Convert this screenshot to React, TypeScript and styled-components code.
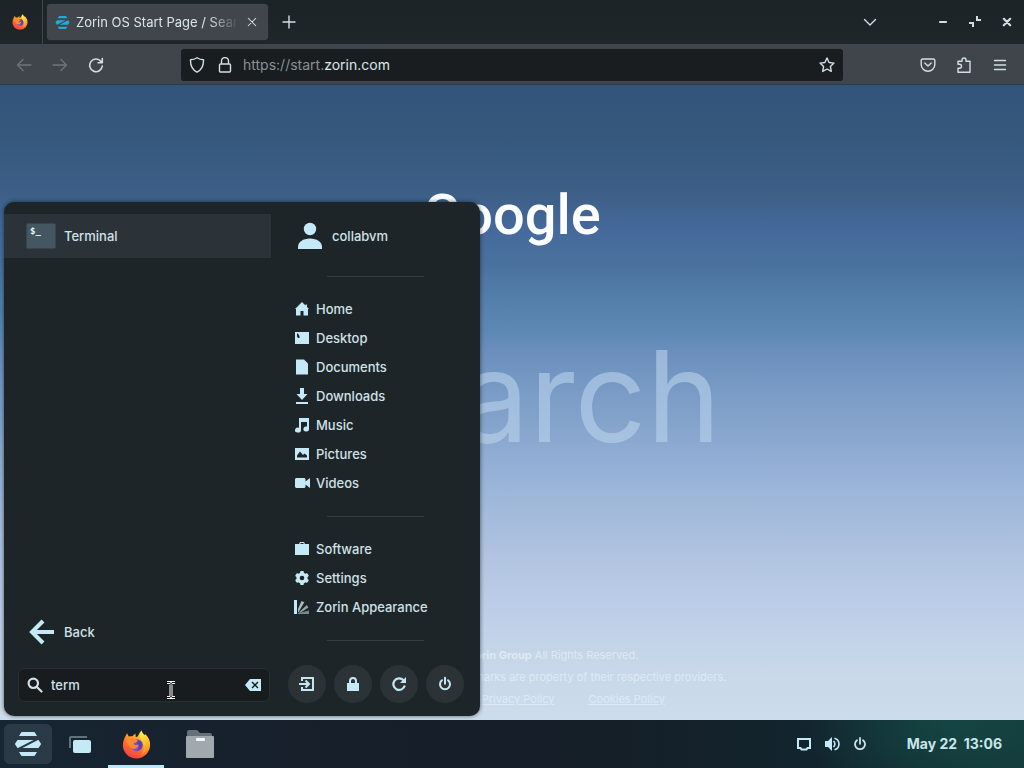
import React from 'react';
import styled, { createGlobalStyle } from 'styled-components';

const Global = createGlobalStyle`
  * { box-sizing: border-box; }
  body { margin: 0; font-family: Inter, "Liberation Sans", sans-serif; color: #d3e2e8; }
  button { font: inherit; color: inherit; background: none; border: 0; padding: 0; margin: 0; }
  input { font: inherit; color: inherit; }
  svg { display: block; flex: none; }
  h1 { margin: 0; }
`;

const Desktop = styled.div`
  position: relative;
  display: flex;
  flex-direction: column;
  min-height: 100vh;
  overflow: hidden;
`;

const Browser = styled.section`
  flex: 1;
  display: flex;
  flex-direction: column;
`;

const TabBar = styled.header`
  display: flex;
  align-items: center;
  height: 44px;
  background: linear-gradient(#1b2427, #1f262a);
`;

const PinnedTab = styled.button`
  display: flex;
  align-items: center;
  justify-content: center;
  width: 43px;
  height: 44px;
  padding-right: 3px;
  border-right: 1px solid #3f474d;
`;

const Tab = styled.div`
  display: flex;
  align-items: center;
  gap: 6px;
  width: 221px;
  height: 36px;
  margin-left: 4px;
  padding: 0 8px;
  border-radius: 4px;
  background: #40464b;
  box-shadow: 0 0 1px #50575c;
`;

const TabTitle = styled.span`
  flex: 1;
  overflow: hidden;
  white-space: nowrap;
  font-size: 13px;
  line-height: 20px;
  color: #d9e5ea;
  mask-image: linear-gradient(to right, #000 82%, transparent);
`;

const IconButton = styled.button<{ $size?: number; $dim?: boolean }>`
  display: flex;
  align-items: center;
  justify-content: center;
  width: ${(p) => p.$size ?? 36}px;
  height: ${(p) => p.$size ?? 36}px;
  color: ${(p) => (p.$dim ? '#6d7478' : '#cfe0e6')};
`;

const WindowControls = styled.div`
  display: flex;
  margin-left: auto;
`;

const TitleButtons = styled.div`
  display: flex;
  margin-left: 39px;
  margin-right: 1px;
`;

const Toolbar = styled.nav`
  display: flex;
  align-items: center;
  height: 41px;
  padding: 1px 6px 0;
  background: #40454b;
  border-bottom: 1px solid #2b3b4c;
`;

const AddressBar = styled.label`
  display: flex;
  align-items: center;
  flex: 1;
  height: 32px;
  max-width: 662px;
  margin: 0 auto 0 67px;
  padding: 0 8px;
  gap: 12px;
  border-radius: 3px;
  background: #191d20;
  color: #cfe0e6;
`;

const Address = styled.span`
  flex: 1;
  display: flex;
  margin-left: -2px;
  font-size: 14px;
  line-height: 20px;
  color: #899196;
  b { font-weight: 400; color: #dce8ec; }
`;

const StartPage = styled.main`
  flex: 1;
  display: flex;
  flex-direction: column;
  align-items: center;
  background: linear-gradient(
    #33547b 0%, #35587c 8%, #3e6089 18%, #44689a 22%, #4a719e 28%, #527da9 33%,
    #5e89b4 39%, #6c8ebc 42%, #7699c4 47%, #84a3cb 53%, #94afd6 60%, #a0b9da 66%,
    #b0c3e0 74%, #bdcfe8 83%, #c7d7e9 91%, #cddcec 100%);
`;

const Logo = styled.h1`
  margin-top: 96px;
  font: 500 56px/68px Roboto, sans-serif;
  color: #fbfdff;
`;

const SearchWord = styled.div`
  margin-top: 69px;
  font-size: 126px;
  line-height: 156px;
  color: rgba(187, 211, 237, 0.6);
`;

const Footer = styled.footer`
  margin-top: auto;
  padding-bottom: 10px;
  font-size: 11px;
  line-height: 22px;
  text-align: center;
  color: #dfe9f4;
  p { margin: 0; }
  a { color: inherit; margin: 0 17px; }
`;

const Menu = styled.aside`
  position: absolute;
  left: 4px;
  bottom: 52px;
  display: grid;
  grid-template-columns: 267px 1fr;
  width: 476px;
  height: 514px;
  border-radius: 10px;
  background: #1e2528;
  box-shadow: 0 0 4px rgba(10, 20, 30, 0.65);
  font-size: 13px;
  font-weight: 500;
  line-height: 20px;
  color: #d0e1e8;
`;

const Results = styled.div`
  display: flex;
  flex-direction: column;
  padding: 12px 0 14px;
`;

const ResultRow = styled.button<{ $active?: boolean }>`
  display: flex;
  align-items: center;
  gap: 8px;
  height: 44px;
  padding: 0 0 1px 22px;
  text-align: left;
  background: ${(p) => (p.$active ? '#2b3338' : 'none')};
`;

const TerminalIcon = styled.span`
  width: 30px;
  height: 26px;
  padding: 2px 3px;
  border: 1px solid #35464f;
  border-radius: 2px;
  background: #435661;
  font: 700 9px/11px "DejaVu Sans Mono", monospace;
  color: #e8f6fb;
`;

const SearchField = styled.label`
  display: flex;
  align-items: center;
  gap: 8px;
  height: 34px;
  margin: 14px 1px 0 14px;
  padding: 0 8px;
  border: 1px solid #293034;
  border-radius: 6px;
  background: #191c1f;
`;

const SearchInput = styled.input`
  flex: 1;
  min-width: 0;
  padding: 0;
  border: 0;
  outline: 0;
  background: none;
`;

const Spacer = styled.div`
  flex: 1;
`;

const Places = styled.div`
  display: flex;
  flex-direction: column;
  padding: 12px 13px 13px 17px;
`;

const User = styled.button`
  display: flex;
  align-items: center;
  gap: 8px;
  height: 44px;
  padding-left: 8px;
`;

const Divider = styled.hr`
  width: 97px;
  height: 1px;
  margin: 18px 0 18px 39px;
  border: 0;
  background: #353d41;
`;

const PlaceLink = styled.button`
  display: flex;
  align-items: center;
  gap: 6px;
  height: 29px;
  padding: 0 0 2px 6px;
  white-space: nowrap;
`;

const SessionRow = styled.div`
  display: flex;
  gap: 8px;
  margin-top: auto;
`;

const RoundButton = styled.button`
  display: flex;
  align-items: center;
  justify-content: center;
  width: 38px;
  height: 38px;
  border-radius: 50%;
  background: #2b3337;
  color: #c6e5f2;
`;

const Taskbar = styled.footer`
  display: flex;
  align-items: center;
  height: 48px;
  padding: 0 22px 0 4px;
  background:
    radial-gradient(ellipse 150px 80px at 93% 10%, rgba(22, 78, 74, 0.7), transparent),
    linear-gradient(to right, #162633, #171f2a 32%, #151f28 60%, #12252e 80%, #133838);
`;

const TaskButton = styled.button<{ $width: number; $selected?: boolean; $running?: boolean }>`
  display: flex;
  align-items: center;
  justify-content: center;
  width: ${(p) => p.$width}px;
  height: ${(p) => (p.$selected ? 40 : 48)}px;
  border-radius: ${(p) => (p.$selected ? 6 : 0)}px;
  background: ${(p) => (p.$selected ? '#2a3a47' : 'none')};
  box-shadow: ${(p) => (p.$running ? 'inset 0 -3px #bde6fb' : 'none')};
`;

const Tray = styled.div`
  display: flex;
  align-items: center;
  margin-left: auto;
  margin-right: 33px;
`;

const Clock = styled.time`
  font-size: 14px;
  font-weight: 700;
  line-height: 20px;
  white-space: pre;
  color: #c9e5ea;
`;

const Pointer = styled.svg`
  position: absolute;
  left: 166px;
  bottom: 68px;
`;

const ICE = '#c6e9f8';

type LineProps = { d: string; size?: number; width?: number };
const Line = ({ d, size = 16, width = 1.4 }: LineProps) => (
  <svg width={size} height={size} viewBox="0 0 16 16" fill="none" stroke="currentColor"
    strokeWidth={width} strokeLinecap="round" strokeLinejoin="round"><path d={d} /></svg>
);

const Solid = ({ d, size = 16 }: { d: string; size?: number }) => (
  <svg width={size} height={size} viewBox="0 0 16 16" fill={ICE} fillRule="evenodd"><path d={d} /></svg>
);

const Firefox = ({ size }: { size: number }) => (
  <svg width={size} height={size} viewBox="0 0 32 32">
    <defs>
      <linearGradient id="ffBody" x1="0.8" y1="0" x2="0.25" y2="1">
        <stop offset="0" stopColor="#fff34a" />
        <stop offset="0.35" stopColor="#ffa52b" />
        <stop offset="0.65" stopColor="#ff6b2c" />
        <stop offset="1" stopColor="#f0384e" />
      </linearGradient>
      <linearGradient id="ffTail" x1="0.4" y1="0" x2="0.7" y2="1">
        <stop offset="0" stopColor="#fff14d" />
        <stop offset="0.5" stopColor="#ffc42b" />
        <stop offset="1" stopColor="#ff8a24" />
      </linearGradient>
    </defs>
    <path fill="url(#ffBody)" d="M3.500 7.500 5.600 3.500 7.400 7.200c1.400-.5 2.800-.5 4-.2L14.800 3.800l.4 4.200C18.500 7.500 18 4 21.500.5c.8 3 2 3.500 3.200 5.200l.8-1.200C29.500 8 31.500 12.500 31 17.500 30.300 25.500 24 31.500 16 31.500S1 25 1 17c0-3.600 1-6.500 2.500-9.500z" />
    <circle cx="16" cy="16.800" r="6.600" fill="#8a50c8" />
    <path fill="#5b3fb4" d="M15 11.500c5-1.500 8.500 2 7.500 6.500-.8 3.500-4 5.500-7 5 3-1.500 4-4.500 2-6.500z" />
    <path fill="#ff8b2b" d="M4.500 12.500c2.500-4 7.500-4.500 10.500-1.800 1.400.3 2.500.8 2.500 1.600-1.500 1.200-4.500 1-4.700 3.400 1.800 1.800 4 1 5.700.3-1 5-8 6.500-10.500 2.200-1.500-1.700-2.500-3.700-3.500-5.700z" />
    <path fill="url(#ffTail)" d="M21.500.5c.8 3 2 3.500 3.200 5.200C29 10 30 16 27.500 21c-1.200 2.800-3.500 5-6 6.200 3-5 3.400-9.500 1.400-13.200C21.300 10.600 17.500 7.500 21.500.5z" />
  </svg>
);

const Zorin = ({ size, color }: { size: number; color: string }) => (
  <svg width={size} height={size} viewBox="0 0 28 28" fill={color}>
    <path d="M7.500 2h13l2.500 4H5zM7.500 26h13l2.500-4H5z" />
    <path d="M3.500 10h16L4 18h-.5L.8 14zM24.500 18h-16L24 10h.5l2.700 4z" />
  </svg>
);

const Gear = () => (
  <svg width={16} height={16} viewBox="0 0 16 16">
    <g fill={ICE}>
      <circle cx="8" cy="8" r="5.600" />
      {[0, 60, 120].map((a) => (
        <rect key={a} x="6.200" y="1" width="3.600" height="14" rx="0.800" transform={`rotate(${a} 8 8)`} />
      ))}
    </g>
    <circle cx="8" cy="8" r="2.300" fill="#1e2528" />
  </svg>
);

const Swatches = () => (
  <svg width={16} height={16} viewBox="0 0 16 16">
    <path fill={ICE} d="M0 1h3v14H0z" />
    <path fill="#a9bcc5" d="M4 10 7.500 2l2.800 1.300L4 14z" />
    <path fill="#93a5ae" d="M5 13.300 12.800 6l1.600 2.400L6 14z" />
    <path fill="#77888f" d="M4 15v-.8l11-2.700V15z" />
  </svg>
);

const PLACES = [
  { name: 'Home', d: 'M8 1 1 8h1v6.500h4.500V10h3v4.500H14V8h1l-2-2V3.500h-1.500v1z' },
  { name: 'Desktop', d: 'M1 2h14v12H1zM3 3.500v3l1 1.500h1.500V6L4 3.500z' },
  { name: 'Documents', d: 'M2 .5h8L14 4.500v11H2z' },
  { name: 'Downloads', d: 'M6 0h4v6h3.500L8 12 2.500 6H6zM2 14h12v2H2z' },
  { name: 'Music', d: 'M5 1h10v11a2.800 2.500 0 1 1-2-2.400V5H7v8a3 2.500 0 1 1-2-2.300z' },
  { name: 'Pictures', d: 'M1 2h14v12H1zM3 11.500h10V9.500l-2.500-2-1.500 1.500-3-3.500L3 9.500z' },
  { name: 'Videos', d: 'M2 3h8.500l1 1v2.500L16 3v10l-4.500-3.500V12l-1 1H2l-1-1V4z' },
];

const POWER = 'M5 4.200a5 5 0 1 0 6 0M8 1.800v6';

export default function App() {
  return (
    <>
      <Global />
      <Desktop>
        <Browser>
          <TabBar>
            <PinnedTab aria-label="Firefox View"><Firefox size={16} /></PinnedTab>
            <Tab>
              <Zorin size={15} color="#22a9dc" />
              <TabTitle>Zorin OS Start Page / Search</TabTitle>
              <IconButton $size={16} aria-label="Close tab"><Line size={12} d="M3 3l10 10M13 3L3 13" /></IconButton>
            </Tab>
            <IconButton $size={42} aria-label="New tab"><Line d="M8 2v12M2 8h12" /></IconButton>
            <WindowControls>
              <IconButton aria-label="List all tabs"><Line d="M2.500 5.500 8 11l5.500-5.500" /></IconButton>
            </WindowControls>
            <TitleButtons>
              <IconButton $size={32} aria-label="Minimize"><Line width={2.200} d="M5 8h6" /></IconButton>
              <IconButton $size={32} aria-label="Restore">
                <svg width={16} height={16} viewBox="0 0 16 16" fill="none" stroke="currentColor" strokeWidth={2}>
                  <path d="M10 2v4h4M2 9h4v4" />
                </svg>
              </IconButton>
              <IconButton $size={32} aria-label="Close"><Line width={2.200} d="M4.800 4.800l6.400 6.400M11.200 4.800l-6.400 6.400" /></IconButton>
            </TitleButtons>
          </TabBar>
          <Toolbar>
            <IconButton $dim aria-label="Back"><Line d="M15 8H1.500M7 2.500 1.500 8 7 13.500" /></IconButton>
            <IconButton $dim aria-label="Forward"><Line d="M1 8h13.500M9 2.500 14.500 8 9 13.500" /></IconButton>
            <IconButton aria-label="Reload"><Line width={1.600} d="M13 4.500A6.300 6.300 0 1 0 14.300 9M14.300 1.500v4.200h-4.200" /></IconButton>
            <AddressBar>
              <Line d="M8 .8c2 1.400 4.200 2 6.500 2C14.700 9 12.500 13 8 15.200 3.500 13 1.300 9 1.500 2.800c2.300 0 4.500-.6 6.500-2z" />
              <Line d="M3.500 7h9a1 1 0 0 1 1 1v6a1 1 0 0 1-1 1h-9a1 1 0 0 1-1-1V8a1 1 0 0 1 1-1zM4.500 7V4a3.500 3.500 0 0 1 7 0v3" />
              <Address>https://start.<b>zorin.com</b></Address>
              <Line d="M8 1l2.100 4.500 4.900.6-3.600 3.400.9 4.900L8 12l-4.300 2.400.9-4.900L1 6.100l4.900-.6z" />
            </AddressBar>
            <IconButton aria-label="Save to Pocket"><Line d="M2.500 2h11a1.300 1.300 0 0 1 1.300 1.300V7.500a6.800 6.800 0 0 1-13.600 0V3.300A1.300 1.300 0 0 1 2.500 2zM4.800 6 8 9l3.200-3" /></IconButton>
            <IconButton aria-label="Extensions"><Line d="M2 5.500V4.300h4V3a2 2 0 0 1 4 0v1.300h4v11H2v-4h1.500a2 2 0 0 0 0-4H2z" /></IconButton>
            <IconButton aria-label="Application menu"><Line d="M2.500 3.500h11M2.500 8h11M2.500 12.500h11" /></IconButton>
          </Toolbar>
          <StartPage>
            <Logo>Google</Logo>
            <SearchWord>Search</SearchWord>
            <Footer>
              <p>© 2008 - 2023 <b>Zorin Group</b> All Rights Reserved.</p>
              <p>All logos, service marks and trademarks are property of their respective providers.</p>
              <p><a href="#terms">Terms of Service</a><a href="#privacy">Privacy Policy</a><a href="#cookies">Cookies Policy</a></p>
            </Footer>
          </StartPage>
        </Browser>

        <Menu>
          <Results>
            <ResultRow $active><TerminalIcon>$_</TerminalIcon>Terminal</ResultRow>
            <Spacer />
            <ResultRow>
              <svg width={30} height={30} viewBox="0 0 30 30" fill="none" stroke={ICE} strokeWidth={4}>
                <path d="M28 15H6M17 4 6 15l11 11" />
              </svg>
              Back
            </ResultRow>
            <SearchField>
              <Line width={2.200} d="M10.200 10.200 14.500 14.500M11 6.300a4.700 4.700 0 1 1-9.400 0a4.700 4.700 0 0 1 9.400 0z" />
              <SearchInput defaultValue="term" aria-label="Search" />
              <Solid d="M5 2h11v12H5L0 8zM7.500 4.500 6.500 5.500 9 8l-2.500 2.500 1 1L10 9l2.500 2.500 1-1L11 8l2.500-2.500-1-1L10 7z" />
            </SearchField>
          </Results>
          <Places>
            <User>
              <svg width={28} height={28} viewBox="0 0 28 28" fill={ICE}>
                <circle cx="14" cy="7" r="6.200" /><path d="M2 27v-2c0-5 5-8.500 12-8.500S26 20 26 25v2z" />
              </svg>
              collabvm
            </User>
            <Divider />
            {PLACES.map((p) => <PlaceLink key={p.name}><Solid d={p.d} />{p.name}</PlaceLink>)}
            <Divider />
            <PlaceLink><Solid d="M1 3h4l1-2h4l1 2h4v11H1zM6.200 3h3.600L9.300 2H6.700z" />Software</PlaceLink>
            <PlaceLink><Gear />Settings</PlaceLink>
            <PlaceLink><Swatches />Zorin Appearance</PlaceLink>
            <Divider />
            <SessionRow>
              <RoundButton aria-label="Log out">
                <svg width={16} height={16} viewBox="0 0 16 16" fill="none" stroke="currentColor" strokeWidth={2}>
                  <path d="M3 5V2h11v12H3v-3M0 8h9M6.500 4.500 10 8l-3.500 3.500" />
                </svg>
              </RoundButton>
              <RoundButton aria-label="Lock"><Solid d="M2 7h2V5a4 4 0 0 1 8 0v2h2v8H2zM6 7h4V5a2 2 0 0 0-4 0z" /></RoundButton>
              <RoundButton aria-label="Restart">
                <svg width={16} height={16} viewBox="0 0 16 16">
                  <path d="M12.500 4.300A5.800 5.800 0 1 0 13.800 9.500" fill="none" stroke="currentColor" strokeWidth={2.200} />
                  <path d="M15 1v6H9z" fill="currentColor" />
                </svg>
              </RoundButton>
              <RoundButton aria-label="Power off"><Line width={2} d={POWER} /></RoundButton>
            </SessionRow>
          </Places>
        </Menu>

        <Pointer width={10} height={20} viewBox="0 0 10 20" fill="none">
          <path d="M1 2.500h3l1 1 1-1h3M1 17.500h3l1-1 1 1h3M5 3v14" stroke="#fff" strokeWidth={3} />
          <path d="M1 2.500h3l1 1 1-1h3M1 17.500h3l1-1 1 1h3M5 3v14" stroke="#111" strokeWidth={1} />
        </Pointer>

        <Taskbar>
          <TaskButton $width={48} $selected aria-label="Zorin menu"><Zorin size={28} color={ICE} /></TaskButton>
          <TaskButton $width={56} aria-label="Workspaces">
            <svg width={24} height={18} viewBox="0 0 24 18">
              <path d="M2 13V3a1 1 0 0 1 1-1h16" fill="none" stroke="#5d7480" strokeWidth={2} />
              <rect x="5" y="5" width="18" height="13" rx="2" fill={ICE} />
            </svg>
          </TaskButton>
          <TaskButton $width={56} $running aria-label="Firefox"><Firefox size={29} /></TaskButton>
          <TaskButton $width={72} aria-label="Files">
            <svg width={30} height={30} viewBox="0 0 30 30">
              <path d="M2 3a2 2 0 0 1 2-2h8l3 3h10a2 2 0 0 1 2 2v8H2z" fill="#65727a" />
              <rect x="1" y="7" width="28" height="22" rx="1" fill="#a0a9ad" />
              <rect x="11" y="9" width="9" height="3" rx="1" fill="#f1f6f8" />
            </svg>
          </TaskButton>
          <Tray>
            <IconButton $size={28} aria-label="Display">
              <svg width={16} height={16} viewBox="0 0 16 16" fill="none" stroke={ICE} strokeWidth={2}>
                <path d="M2 3h12v9h-2.500l-1 1.500h-5L4.500 12H2z" />
              </svg>
            </IconButton>
            <IconButton $size={28} aria-label="Volume">
              <svg width={16} height={16} viewBox="0 0 16 16" fill={ICE}>
                <path d="M1 5h3l4-4v14l-4-4H1z" />
                <path d="M9.500 5a4 4 0 0 1 0 6M10.500 2.200a6 6 0 0 1 0 11.600" fill="none" stroke={ICE} strokeWidth={1.600} />
              </svg>
            </IconButton>
            <IconButton $size={28} aria-label="Power"><Line width={1.800} d={POWER} /></IconButton>
          </Tray>
          <Clock>May 22  13:06</Clock>
        </Taskbar>
      </Desktop>
    </>
  );
}
